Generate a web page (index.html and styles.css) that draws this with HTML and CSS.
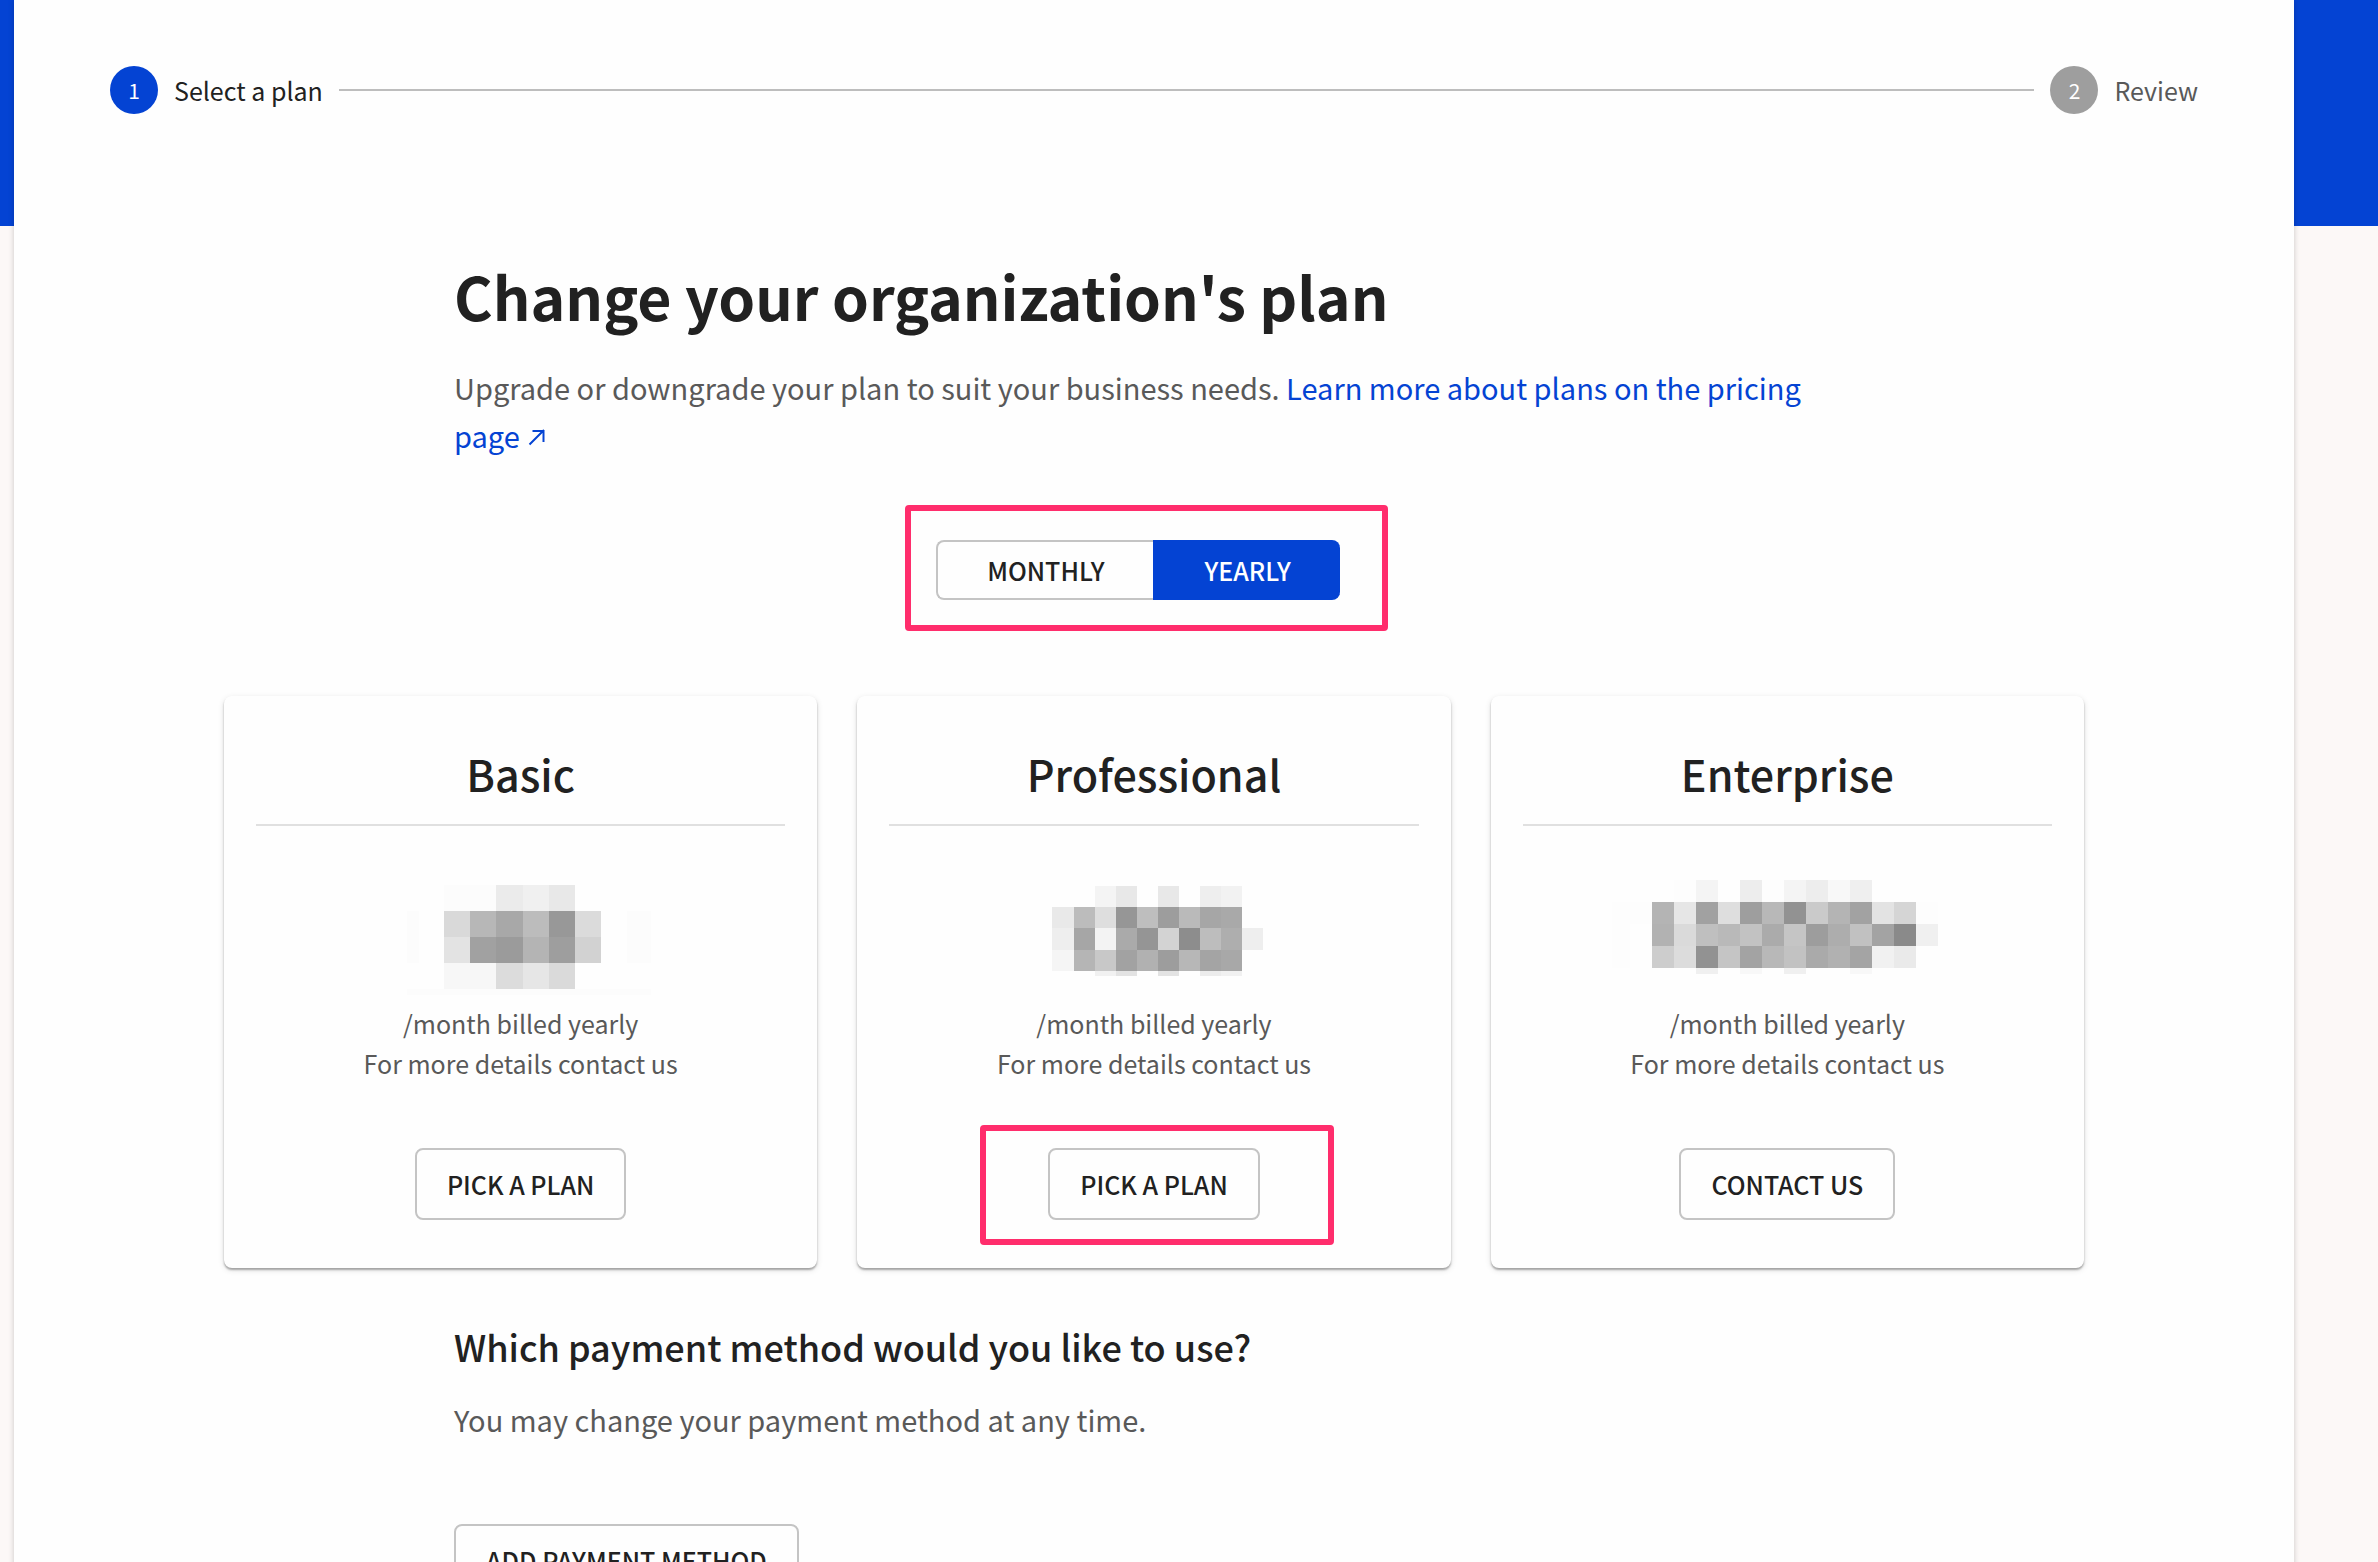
FILE: index.html
```html
<!DOCTYPE html>
<html lang="en">
<head>
<meta charset="utf-8">
<meta name="viewport" content="width=device-width, initial-scale=1">
<title>Change your organization's plan</title>
<link rel="stylesheet" href="styles.css">
</head>
<body>
<main class="panel">
  <ol class="stepper">
    <li class="step step-active" aria-current="step"><span class="step-number">1</span><span class="step-label">Select a plan</span></li>
    <li class="step-line" aria-hidden="true"></li>
    <li class="step"><span class="step-number">2</span><span class="step-label">Review</span></li>
  </ol>

  <section class="column intro">
    <h1 class="title">Change your organization's plan</h1>
    <p class="lead">Upgrade or downgrade your plan to suit your business needs. <a class="link" href="#pricing">Learn more about plans on the pricing page <svg class="link-icon" viewBox="0 0 18 18" aria-hidden="true"><path d="M1.500 14.500 16 0M4.500 1H15.500V12" fill="none" stroke="currentColor" stroke-width="2"/></svg></a></p>
    <div class="toggle marked" role="group" aria-label="Billing period">
      <button class="toggle-option" type="button" aria-pressed="false">MONTHLY</button>
      <button class="toggle-option toggle-on" type="button" aria-pressed="true">YEARLY</button>
    </div>
  </section>

  <section class="plans" aria-label="Plans">
    <article class="card">
      <h2 class="card-title">Basic</h2>
      <svg class="price" viewBox="0 0 320 120" role="img" aria-label="Price hidden" shape-rendering="crispEdges">
        <g transform="translate(83 9)">
          <path fill="#fcfcfc" d="M0 0h52v26H0zM-37 26h12v52h-12zM183 26h24v52h-24zM-37 104h244v6H-37z"/>
          <path fill="#ebebeb" d="M52 0h27v26H52z"/><path fill="#f0f0f0" d="M79 0h26v26H79z"/><path fill="#e8e8e8" d="M105 0h26v26h-26z"/>
          <path fill="#d9d9d9" d="M0 26h26v26H0z"/><path fill="#b7b7b7" d="M26 26h26v26H26z"/><path fill="#a8a8a8" d="M52 26h27v26H52z"/><path fill="#bcbcbc" d="M79 26h26v26H79z"/><path fill="#989898" d="M105 26h26v26h-26z"/><path fill="#dbdbdb" d="M131 26h26v26h-26z"/>
          <path fill="#e3e3e3" d="M0 52h26v26H0z"/><path fill="#a1a1a1" d="M26 52h26v26H26z"/><path fill="#9b9b9b" d="M52 52h27v26H52z"/><path fill="#b4b4b4" d="M79 52h26v26H79z"/><path fill="#9e9e9e" d="M105 52h26v26h-26z"/><path fill="#d2d2d2" d="M131 52h26v26h-26z"/>
          <path fill="#f7f7f7" d="M0 78h52v26H0z"/><path fill="#dcdcdc" d="M52 78h27v26H52z"/><path fill="#e6e6e6" d="M79 78h26v26H79z"/><path fill="#dadada" d="M105 78h26v26h-26z"/>
        </g>
      </svg>
      <p class="billing">/month billed yearly<br>For more details contact us</p>
      <button class="button" type="button">PICK A PLAN</button>
    </article>

    <article class="card">
      <h2 class="card-title">Professional</h2>
      <svg class="price" viewBox="0 0 320 120" role="img" aria-label="Price hidden" shape-rendering="crispEdges">
        <g transform="translate(58 10)">
          <path fill="#f4f4f4" d="M43 0h21v21H43z"/><path fill="#e8e8e8" d="M64 0h21v21H64zM106 0h21v21h-21z"/><path fill="#eee" d="M148 0h21v21h-21z"/><path fill="#f2f2f2" d="M169 0h21v21h-21z"/>
          <path fill="#e9e9e9" d="M0 21h22v21H0z"/><path fill="#bcbcbc" d="M22 21h21v21H22z"/><path fill="#dedede" d="M43 21h21v21H43z"/><path fill="#969696" d="M64 21h21v21H64z"/><path fill="#bebebe" d="M85 21h21v21H85z"/><path fill="#9d9d9d" d="M106 21h21v21h-21z"/><path fill="#bababa" d="M127 21h21v21h-21z"/><path fill="#a6a6a6" d="M148 21h21v21h-21z"/><path fill="#a9a9a9" d="M169 21h21v21h-21z"/>
          <path fill="#eee" d="M0 42h22v22H0z"/><path fill="#a6a6a6" d="M22 42h21v22H22z"/><path fill="#f3f3f3" d="M43 42h21v22H43z"/><path fill="#aaa" d="M64 42h21v22H64z"/><path fill="#959595" d="M85 42h21v22H85z"/><path fill="#d3d3d3" d="M106 42h21v22h-21z"/><path fill="#8d8d8d" d="M127 42h21v22h-21z"/><path fill="#bdbdbd" d="M148 42h21v22h-21z"/><path fill="#aeaeae" d="M169 42h21v22h-21z"/><path fill="#eee" d="M190 42h21v22h-21z"/>
          <path fill="#f5f5f5" d="M0 64h22v21H0z"/><path fill="#b5b5b5" d="M22 64h21v21H22z"/><path fill="#c8c8c8" d="M43 64h21v21H43z"/><path fill="#a2a2a2" d="M64 64h21v21H64z"/><path fill="#b1b1b1" d="M85 64h21v21H85z"/><path fill="#9d9d9d" d="M106 64h21v21h-21z"/><path fill="#b7b7b7" d="M127 64h21v21h-21z"/><path fill="#a4a4a4" d="M148 64h21v21h-21z"/><path fill="#a8a8a8" d="M169 64h21v21h-21z"/>
          <path fill="#f1f1f1" d="M43 85h21v5H43zM169 85h21v5h-21z"/><path fill="#e3e3e3" d="M64 85h21v5H64zM106 85h21v5h-21z"/><path fill="#ececec" d="M148 85h21v5h-21z"/>
        </g>
      </svg>
      <p class="billing">/month billed yearly<br>For more details contact us</p>
      <div class="marked marked-wide"><button class="button" type="button">PICK A PLAN</button></div>
    </article>

    <article class="card">
      <h2 class="card-title">Enterprise</h2>
      <svg class="price" viewBox="0 0 320 120" role="img" aria-label="Price hidden" shape-rendering="crispEdges">
        <g transform="translate(25 4)">
          <path fill="#fdfdfd" d="M22 0h22v22H22zM110 0h22v22h-22zM-40 22H0v22h-40zM264 22h22v22h-22zM-40 44h18v44h-18z"/>
          <path fill="#f4f4f4" d="M44 0h22v22H44zM132 0h22v22h-22z"/><path fill="#ededed" d="M88 0h22v22H88zM154 0h22v22h-22z"/><path fill="#f8f8f8" d="M176 0h22v22h-22z"/><path fill="#efefef" d="M198 0h22v22h-22z"/>
          <path fill="#b4b4b4" d="M0 22h22v22H0z"/><path fill="#e6e6e6" d="M22 22h22v22H22z"/><path fill="#a1a1a1" d="M44 22h22v22H44z"/><path fill="#dedede" d="M66 22h22v22H66z"/><path fill="#9e9e9e" d="M88 22h22v22H88z"/><path fill="#b8b8b8" d="M110 22h22v22h-22z"/><path fill="#929292" d="M132 22h22v22h-22z"/><path fill="#cacaca" d="M154 22h22v22h-22z"/><path fill="#b4b4b4" d="M176 22h22v22h-22z"/><path fill="#a2a2a2" d="M198 22h22v22h-22z"/><path fill="#e3e3e3" d="M220 22h22v22h-22z"/><path fill="#d5d5d5" d="M242 22h22v22h-22z"/>
          <path fill="#b2b2b2" d="M0 44h22v22H0z"/><path fill="#dadada" d="M22 44h22v22H22z"/><path fill="#bfbfbf" d="M44 44h22v22H44z"/><path fill="#b9b9b9" d="M66 44h22v22H66z"/><path fill="#c2c2c2" d="M88 44h22v22H88z"/><path fill="#ababab" d="M110 44h22v22h-22z"/><path fill="#c5c5c5" d="M132 44h22v22h-22z"/><path fill="#9d9d9d" d="M154 44h22v22h-22z"/><path fill="#adadad" d="M176 44h22v22h-22z"/><path fill="#c1c1c1" d="M198 44h22v22h-22z"/><path fill="#a3a3a3" d="M220 44h22v22h-22z"/><path fill="#8a8a8a" d="M242 44h22v22h-22z"/><path fill="#f0f0f0" d="M264 44h22v22h-22z"/>
          <path fill="#cdcdcd" d="M0 66h22v22H0z"/><path fill="#dcdcdc" d="M22 66h22v22H22z"/><path fill="#929292" d="M44 66h22v22H44z"/><path fill="#c5c5c5" d="M66 66h22v22H66z"/><path fill="#a3a3a3" d="M88 66h22v22H88z"/><path fill="#b8b8b8" d="M110 66h22v22h-22z"/><path fill="#c2c2c2" d="M132 66h22v22h-22z"/><path fill="#aaa" d="M154 66h22v22h-22z"/><path fill="#b1b1b1" d="M176 66h22v22h-22z"/><path fill="#a4a4a4" d="M198 66h22v22h-22z"/><path fill="#f1f1f1" d="M220 66h22v22h-22z"/><path fill="#eaeaea" d="M242 66h22v22h-22z"/>
          <path fill="#f0f0f0" d="M44 88h22v6H44zM132 88h22v6h-22z"/><path fill="#f8f8f8" d="M88 88h22v6H88zM198 88h22v6h-22z"/>
        </g>
      </svg>
      <p class="billing">/month billed yearly<br>For more details contact us</p>
      <button class="button" type="button">CONTACT US</button>
    </article>
  </section>

  <section class="column payment">
    <h2 class="subtitle">Which payment method would you like to use?</h2>
    <p class="lead">You may change your payment method at any time.</p>
    <button class="button" type="button">ADD PAYMENT METHOD</button>
  </section>
</main>
</body>
</html>
```
FILE: styles.css
```css
* {
  box-sizing: border-box;
}

body {
  margin: 0;
  height: 100vh;
  overflow: hidden;
  background: linear-gradient(#0443d3 226px, #fcf8f7 226px);
  color: #212121;
  font: 400 25px/40px "Noto Sans CJK SC", "Noto Sans", sans-serif;
}

h1, h2, p, ol {
  margin: 0;
  padding: 0;
}

h1 {
  font-weight: 700;
}

h2 {
  font-weight: 500;
}

button {
  margin: 0;
  font: inherit;
  font-weight: 500;
  color: #212121;
  background: #fefefe;
  border: 2px solid #c4c4c4;
  cursor: pointer;
}

.panel {
  min-height: 100vh;
  margin: 0 84px 0 14px;
  padding: 66px 96px 80px;
  background: #fefefe;
  box-shadow: 0 0 6px rgba(0, 0, 0, 0.2);
}

.stepper {
  display: flex;
  align-items: center;
  gap: 16px;
  list-style: none;
}

.step {
  display: flex;
  align-items: center;
  gap: 16px;
  color: #595959;
}

.step-active {
  color: #212121;
}

.step-number {
  width: 48px;
  border-radius: 50%;
  background: #9e9e9e;
  color: #fff;
  font-size: 21px;
  line-height: 48px;
  text-align: center;
}

.step-active .step-number {
  background: #0443d3;
}

.step-line {
  flex: 1;
  height: 2px;
  background: #bdbdbd;
}

.column {
  max-width: 1400px;
  margin: 0 auto;
  padding-right: 32px;
}

.intro {
  padding-top: 142px;
}

.title {
  margin-bottom: 27px;
  font-size: 59px;
  line-height: 80px;
}

.lead {
  color: #595959;
  font-size: 29px;
  line-height: 48px;
}

.link {
  color: #0443d3;
  text-decoration: none;
}

.link-icon {
  width: 18px;
  height: 18px;
  margin-left: 2px;
  overflow: visible;
}

.toggle {
  display: flex;
  width: max-content;
  margin: 81px auto 0;
}

.toggle-option {
  height: 60px;
  padding: 0 49px;
  border-right: 0;
  border-radius: 8px 0 0 8px;
}

.toggle-on {
  border-color: #0443d3;
  border-radius: 0 8px 8px 0;
  background: #0443d3;
  color: #fff;
}

/* Highlight frame drawn over the page around a control */
.marked {
  position: relative;
}

.marked::after {
  content: "";
  position: absolute;
  inset: -35px -48px -31px -31px;
  border: 6px solid #ff2d6c;
  border-radius: 4px;
  pointer-events: none;
}

.marked-wide::after {
  inset: -23px -74px -25px -68px;
}

.plans {
  display: grid;
  grid-template-columns: repeat(3, 1fr);
  gap: 40px;
  margin: 96px 114px 54px;
}

.card {
  display: flex;
  flex-direction: column;
  align-items: center;
  padding: 45px 32px 48px;
  border-radius: 8px;
  text-align: center;
  box-shadow: 0 2px 2px rgba(0, 0, 0, 0.3), 0 2px 6px rgba(0, 0, 0, 0.12);
}

.card-title {
  align-self: stretch;
  padding-bottom: 19px;
  border-bottom: 2px solid #e0e0e0;
  font-size: 43px;
  line-height: 64px;
}

.price {
  width: 320px;
  height: 120px;
  margin: 50px 0 7px;
  overflow: visible;
}

.billing {
  margin-bottom: 65px;
  color: #595959;
}

.button {
  display: block;
  height: 72px;
  padding: 0 30px;
  border-radius: 8px;
}

.subtitle {
  margin-bottom: 25px;
  font-size: 36px;
  line-height: 48px;
}

.payment .button {
  margin-top: 81px;
}
```
